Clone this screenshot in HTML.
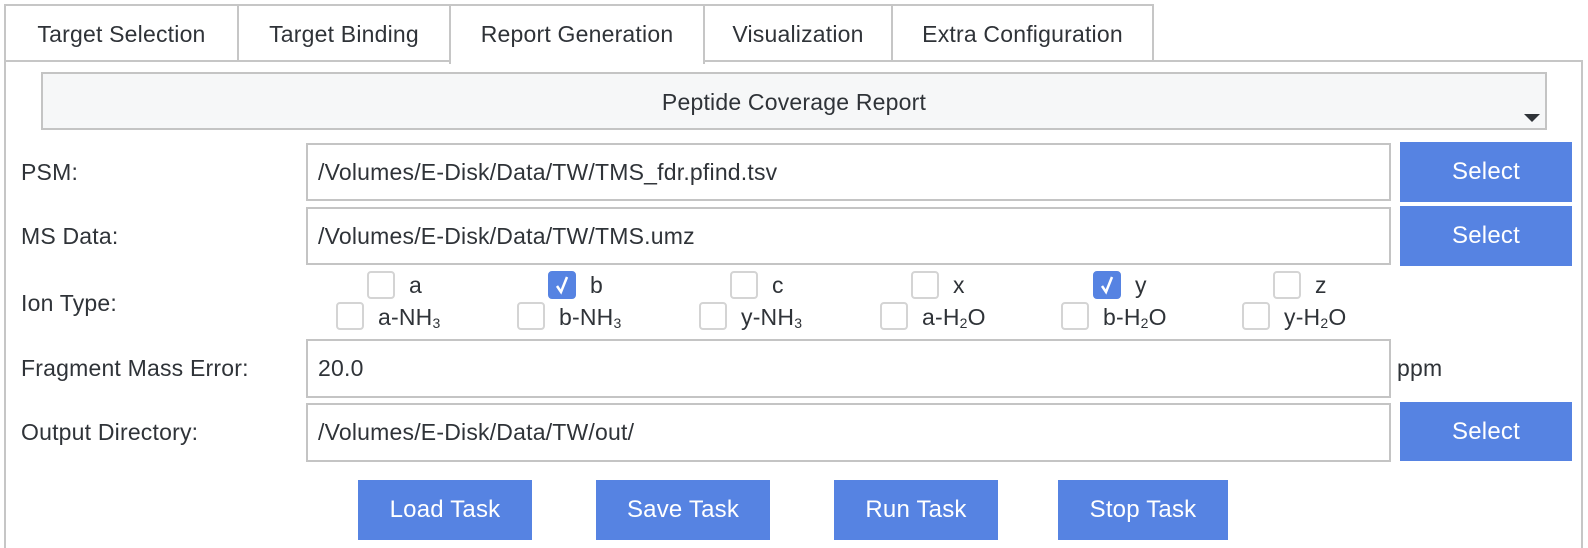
<!DOCTYPE html>
<html style="width:1588px;height:548px;overflow:hidden"><head><meta charset="utf-8"><style>
*{box-sizing:border-box;margin:0;padding:0}
body{width:1588px;height:548px;background:#fff;position:relative;overflow:hidden;font-family:"Liberation Sans",sans-serif;color:#2f3338;font-size:23px;letter-spacing:0.2px}
.a{position:absolute}
.tab{position:absolute;top:4px;height:58px;border:2px solid #c6c6c6;border-right:none;line-height:56px;text-align:center;background:#fff;white-space:nowrap}
.panel{position:absolute;left:4px;top:60px;width:1579px;height:492px;border:2px solid #c6c6c6}
.inp{position:absolute;left:306px;width:1085px;border:2px solid #c4c4c4;padding-left:10px;display:flex;align-items:center;background:#fff}
.btn{position:absolute;background:#5683e2;color:#fff;display:flex;align-items:center;justify-content:center;font-size:24px}
.lbl{position:absolute;left:21px}
.cb{position:absolute;width:28px;height:28px;border:2px solid #d4d4d4;border-radius:4px;background:#fff}
.cb.on{background:#5683e2;border-color:#5683e2}
.t{position:absolute;line-height:28px}
sub{font-size:14px;vertical-align:-3px}
</style></head><body>
<div class="panel"></div>
<div class="tab" style="left:4px;width:233px">Target Selection</div>
<div class="tab" style="left:237px;width:212px">Target Binding</div>
<div class="tab" style="left:449px;width:256px;height:60px;border-bottom:none;border-right:2px solid #c6c6c6">Report Generation</div>
<div class="tab" style="left:705px;width:186px;border-left:none">Visualization</div>
<div class="tab" style="left:891px;width:263px;border-right:2px solid #c6c6c6">Extra Configuration</div>

<div class="a" style="left:41px;top:72px;width:1506px;height:58px;background:#f6f7f8;border:2px solid #c4c4c4;text-align:center;line-height:56px">Peptide Coverage Report</div>
<div class="a" style="left:1524px;top:114px;width:0;height:0;border-left:8px solid transparent;border-right:8px solid transparent;border-top:8px solid #2f3338"></div>

<div class="lbl" style="top:159px">PSM:</div>
<div class="inp" style="top:143px;height:58px">/Volumes/E-Disk/Data/TW/TMS_fdr.pfind.tsv</div>
<div class="btn" style="left:1400px;top:142px;width:172px;height:60px">Select</div>

<div class="lbl" style="top:223px">MS Data:</div>
<div class="inp" style="top:207px;height:58px">/Volumes/E-Disk/Data/TW/TMS.umz</div>
<div class="btn" style="left:1400px;top:206px;width:172px;height:60px">Select</div>

<div class="lbl" style="top:290px">Ion Type:</div>
<div class="cb" style="left:367px;top:271px"></div><div class="t" style="left:409px;top:271px">a</div>
<div class="cb on" style="left:548px;top:271px"><svg width="24" height="24" viewBox="0 0 24 24" style="position:absolute;left:0;top:0"><path d="M7 13 L11 19 L17 4" stroke="#fff" stroke-width="2.5" fill="none"/></svg></div><div class="t" style="left:590px;top:271px">b</div>
<div class="cb" style="left:730px;top:271px"></div><div class="t" style="left:772px;top:271px">c</div>
<div class="cb" style="left:911px;top:271px"></div><div class="t" style="left:953px;top:271px">x</div>
<div class="cb on" style="left:1093px;top:271px"><svg width="24" height="24" viewBox="0 0 24 24" style="position:absolute;left:0;top:0"><path d="M7 13 L11 19 L17 4" stroke="#fff" stroke-width="2.5" fill="none"/></svg></div><div class="t" style="left:1135px;top:271px">y</div>
<div class="cb" style="left:1273px;top:271px"></div><div class="t" style="left:1315px;top:271px">z</div>

<div class="cb" style="left:336px;top:302px"></div><div class="t" style="left:378px;top:303px">a-NH<sub>3</sub></div>
<div class="cb" style="left:517px;top:302px"></div><div class="t" style="left:559px;top:303px">b-NH<sub>3</sub></div>
<div class="cb" style="left:699px;top:302px"></div><div class="t" style="left:741px;top:303px">y-NH<sub>3</sub></div>
<div class="cb" style="left:880px;top:302px"></div><div class="t" style="left:922px;top:303px">a-H<sub>2</sub>O</div>
<div class="cb" style="left:1061px;top:302px"></div><div class="t" style="left:1103px;top:303px">b-H<sub>2</sub>O</div>
<div class="cb" style="left:1242px;top:302px"></div><div class="t" style="left:1284px;top:303px">y-H<sub>2</sub>O</div>

<div class="lbl" style="top:355px">Fragment Mass Error:</div>
<div class="inp" style="top:339px;height:59px">20.0</div>
<div class="a" style="left:1397px;top:355px">ppm</div>

<div class="lbl" style="top:419px">Output Directory:</div>
<div class="inp" style="top:403px;height:59px">/Volumes/E-Disk/Data/TW/out/</div>
<div class="btn" style="left:1400px;top:402px;width:172px;height:59px">Select</div>

<div class="btn" style="left:358px;top:480px;width:174px;height:60px">Load Task</div>
<div class="btn" style="left:596px;top:480px;width:174px;height:60px">Save Task</div>
<div class="btn" style="left:834px;top:480px;width:164px;height:60px">Run Task</div>
<div class="btn" style="left:1058px;top:480px;width:170px;height:60px">Stop Task</div>
</body></html>
